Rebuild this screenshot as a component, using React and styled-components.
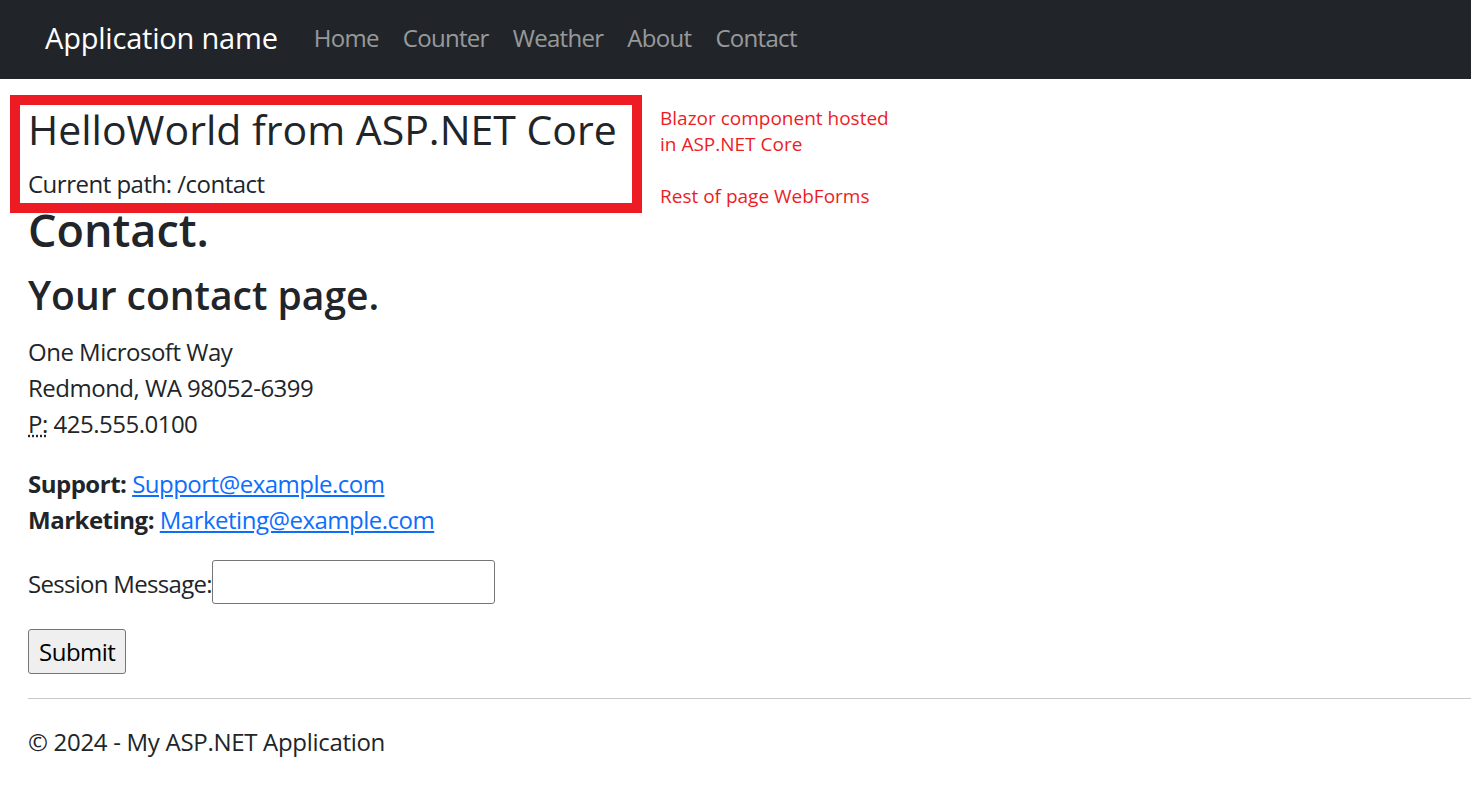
import React from 'react';
import styled, { createGlobalStyle } from 'styled-components';

const GlobalStyle = createGlobalStyle`
  body {
    margin: 0;
    font-family: "Open Sans", "Noto Sans", sans-serif;
    font-size: 24px;
    line-height: 1.5;
    letter-spacing: -0.5px;
    color: #212529;
    background: #fff;
  }
`;

const Navbar = styled.nav`
  display: flex;
  align-items: center;
  box-sizing: border-box;
  height: 79px;
  padding: 0 0 4px 45px;
  background-color: #212529;
`;

const Brand = styled.a`
  font-size: 29px;
  letter-spacing: -0.2px;
  color: #fff;
  text-decoration: none;
  margin-right: 24px;
`;

const NavLink = styled.a`
  font-size: 24px;
  letter-spacing: -0.7px;
  color: rgba(255, 255, 255, 0.55);
  text-decoration: none;
  padding: 0 12px;
`;

const Main = styled.main`
  padding-left: 28px;
`;

const TopRow = styled.div`
  display: flex;
  align-items: flex-start;
  margin: 16px 0 0 -18px;
`;

const HostBox = styled.div`
  box-sizing: border-box;
  width: 632px;
  height: 118px;
  padding: 0 8px;
  border: 10px solid #ed1c24;
`;

const HostTitle = styled.h1`
  margin: 0;
  font-size: 41px;
  font-weight: 400;
  line-height: 48px;
  letter-spacing: 0;
`;

const Path = styled.p`
  margin: 13px 0 0;
`;

const Note = styled.div`
  margin: 10px 0 0 18px;
  font-size: 19px;
  line-height: 26px;
  letter-spacing: 0;
  color: #ed1c24;
`;

const Heading = styled.h2`
  margin: ${p => p.margin};
  font-size: ${p => p.size}px;
  font-weight: 600;
  line-height: ${p => p.lineHeight}px;
  letter-spacing: 0;
`;

const Address = styled.address`
  margin: 15px 0 24px;
  font-style: normal;
`;

const Abbr = styled.abbr`
  text-decoration: underline dotted;
`;

const Contacts = styled.address`
  margin: 0 0 22px;
  font-style: normal;
`;

const Link = styled.a`
  color: #0d6efd;
`;

const Field = styled.div`
  display: flex;
  align-items: center;
`;

const Label = styled.label`
  padding-top: 4px;
  letter-spacing: -0.7px;
`;

const Input = styled.input`
  box-sizing: border-box;
  width: 283px;
  height: 44px;
  border: 1px solid #767676;
  border-radius: 3px;
  font: inherit;
`;

const Button = styled.button`
  margin-top: 25px;
  height: 45px;
  padding: 0 10px;
  font: inherit;
  letter-spacing: inherit;
  color: #000;
  background: #efefef;
  border: 1px solid #767676;
  border-radius: 3px;
`;

const Rule = styled.hr`
  margin: 24px 0 25px;
  border: 0;
  border-top: 1px solid #c8c9ca;
`;

const Footer = styled.footer`
  letter-spacing: -0.3px;

  p {
    margin: 0;
  }
`;

export default function App() {
  return (
    <>
      <GlobalStyle />
      <Navbar>
        <Brand href="#">Application name</Brand>
        {['Home', 'Counter', 'Weather', 'About', 'Contact'].map(l => (
          <NavLink key={l} href="#">{l}</NavLink>
        ))}
      </Navbar>
      <Main>
        <TopRow>
          <HostBox>
            <HostTitle>HelloWorld from ASP.NET Core</HostTitle>
            <Path>Current path: /contact</Path>
          </HostBox>
          <Note>
            Blazor component hosted<br />
            in ASP.NET Core<br />
            <br />
            Rest of page WebForms
          </Note>
        </TopRow>
        <Heading size={45} lineHeight={45} margin="-6px 0 19px">Contact.</Heading>
        <Heading as="h3" size={39} lineHeight={48} margin="0">Your contact page.</Heading>
        <Address>
          One Microsoft Way<br />
          Redmond, WA 98052-6399<br />
          <Abbr title="Phone">P:</Abbr> 425.555.0100
        </Address>
        <Contacts>
          <strong>Support:</strong> <Link href="#">Support@example.com</Link><br />
          <strong>Marketing:</strong> <Link href="#">Marketing@example.com</Link>
        </Contacts>
        <Field>
          <Label htmlFor="msg">Session Message:</Label>
          <Input id="msg" type="text" />
        </Field>
        <Button>Submit</Button>
        <Rule />
        <Footer>
          <p>&copy; 2024 - My ASP.NET Application</p>
        </Footer>
      </Main>
    </>
  );
}
